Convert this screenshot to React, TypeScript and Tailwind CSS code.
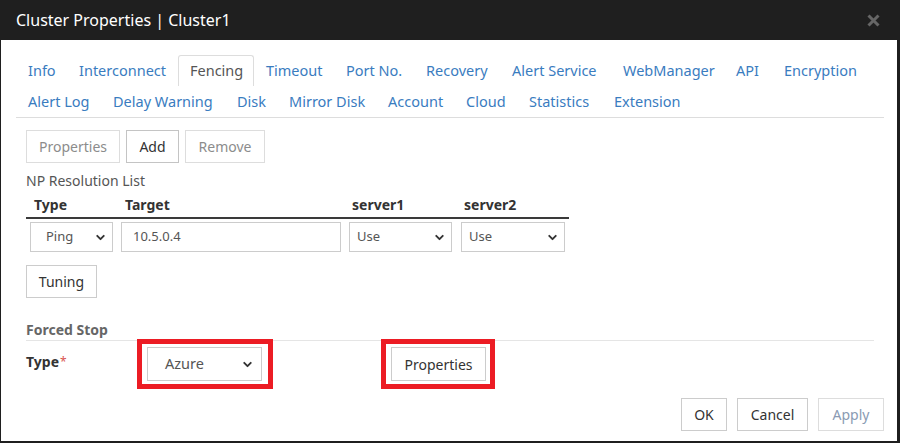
import { ChevronDown } from 'lucide-react';

const rowOne = [
  { label: 'Info', w: 'w-[51px]' },
  { label: 'Interconnect', w: 'w-[111px]' },
  { label: 'Fencing', w: 'w-[76px]', active: true },
  { label: 'Timeout', w: 'w-[80px]' },
  { label: 'Port No.', w: 'w-[80px]' },
  { label: 'Recovery', w: 'w-[86px]' },
  { label: 'Alert Service', w: 'w-[111px]' },
  { label: 'WebManager', w: 'w-[113px]' },
  { label: 'API', w: 'w-[48px]' },
  { label: 'Encryption', w: 'w-[95px]' },
];

const rowTwo = [
  { label: 'Alert Log', w: 'w-[85px]' },
  { label: 'Delay Warning', w: 'w-[124px]' },
  { label: 'Disk', w: 'w-[52px]' },
  { label: 'Mirror Disk', w: 'w-[99px]' },
  { label: 'Account', w: 'w-[78px]' },
  { label: 'Cloud', w: 'w-[63px]' },
  { label: 'Statistics', w: 'w-[85px]' },
  { label: 'Extension', w: 'w-[90px]' },
];

type Tab = { label: string; w: string; active?: boolean };

function TabRow({ tabs }: { tabs: Tab[] }) {
  return (
    <div className="flex h-[31px]">
      {tabs.map((t) =>
        t.active ? (
          <div
            key={t.label}
            className={`${t.w} h-[31px] px-[11px] leading-[29px] border border-b-0 border-[#dddddd] rounded-t-[3px] text-[#555555]`}
          >
            {t.label}
          </div>
        ) : (
          <div key={t.label} className={`${t.w} h-[31px] px-[12px] leading-[31px] text-[#3a7cbf] whitespace-nowrap`}>
            {t.label}
          </div>
        )
      )}
    </div>
  );
}

function Btn({
  label,
  className = '',
  tone = 'text-[#333333] border-[#cccccc]',
}: {
  label: string;
  className?: string;
  tone?: string;
}) {
  return (
    <button className={`h-[33px] border bg-white text-[14px] leading-none ${tone} ${className}`}>{label}</button>
  );
}

function FakeSelect({
  value,
  className,
  textClass = 'pl-[7px] text-[13px]',
}: {
  value: string;
  className: string;
  textClass?: string;
}) {
  return (
    <div className={`flex items-center justify-between border border-[#cccccc] bg-white pr-[5px] ${className}`}>
      <span className={`text-[#555555] ${textClass}`}>{value}</span>
      <ChevronDown className="w-[13px] h-[13px] text-[#333333]" strokeWidth={3.5} />
    </div>
  );
}

export default function App() {
  return (
    <div
      className="w-[900px] h-[443px] bg-[#1f1f1f] flex flex-col overflow-hidden"
      style={{ fontFamily: '"Noto Sans", "Open Sans", sans-serif' }}
    >
      {/* Title bar */}
      <div className="h-10 flex items-center justify-between pl-4 pr-[20px] shrink-0">
        <span className="text-white text-[16px]">Cluster Properties | Cluster1</span>
        <svg width="13" height="13" viewBox="0 0 13 13" className="mt-[0px]">
          <path d="M1.5 1.5 L11.5 11.5 M11.5 1.5 L1.5 11.5" stroke="#666666" strokeWidth="3" strokeLinecap="butt" />
        </svg>
      </div>

      {/* Body */}
      <div className="flex-1 bg-white ml-[1px] mr-[3px] mb-[2px] pl-[15px] pr-[13px] pt-[15px] flex flex-col">
        {/* Tabs */}
        <div className="border-b border-[#dddddd] text-[14.5px]">
          <TabRow tabs={rowOne} />
          <TabRow tabs={rowTwo} />
        </div>

        {/* Pane */}
        <div className="px-[10px] pt-[12px] flex flex-col">
          <div className="flex gap-[6px]">
            <Btn label="Properties" className="w-[94px]" tone="text-[#8c8c8c] border-[#dddddd]" />
            <Btn label="Add" className="w-[53px]" tone="text-[#333333] border-[#c4c4c4]" />
            <Btn label="Remove" className="w-[80px]" tone="text-[#8c8c8c] border-[#dddddd]" />
          </div>

          <div className="mt-[8px] h-[20px] leading-[20px] text-[14px] text-[#555555]">NP Resolution List</div>

          {/* Table */}
          <div className="w-[543px]">
            <div className="flex h-[28px] border-b-2 border-[#3a3a3a] text-[14px] font-bold text-[#333333] items-center">
              <div className="w-[91px] pl-[8px]">Type</div>
              <div className="w-[228px] pl-[8px]">Target</div>
              <div className="w-[112px] pl-[7px]">server1</div>
              <div className="w-[112px] pl-[7px]">server2</div>
            </div>
            <div className="flex pt-[3px] pb-[4px]">
              <div className="w-[91px] pl-[4px]">
                <FakeSelect value="Ping" className="w-[83px] h-[30px]" textClass="pl-[15px] text-[13px]" />
              </div>
              <div className="w-[228px] pl-[4px]">
                <div className="w-[220px] h-[30px] border border-[#cccccc] flex items-center pl-[11px] text-[13px] text-[#555555]">
                  10.5.0.4
                </div>
              </div>
              <div className="w-[112px] pl-[4px]">
                <FakeSelect value="Use" className="w-[103px] h-[30px]" />
              </div>
              <div className="w-[112px] pl-[4px]">
                <FakeSelect value="Use" className="w-[104px] h-[30px]" />
              </div>
            </div>
          </div>

          <div className="mt-[9px]">
            <Btn label="Tuning" className="w-[71px]" />
          </div>

          {/* Forced Stop */}
          <div className="mt-[22px] h-[21px] leading-[20px] border-b border-[#e5e5e5] text-[14px] font-bold text-[#666666]">
            Forced Stop
          </div>

          <div className="mt-[6px] flex items-start">
            <div className="w-[121px] pt-[5px] text-[14px] font-bold text-[#333333] leading-[20px]">
              Type<sup className="text-[#d9534f] font-normal text-[12px] ml-[1px] relative top-[-1px]">*</sup>
            </div>
            <div className="relative">
              <FakeSelect
                value="Azure"
                className="w-[115px] h-[34px] pr-[7px]"
                textClass="pl-[17px] text-[14.5px] text-[#444444]"
              />
              <div className="absolute top-[-8px] bottom-[-8px] left-[-10px] right-[-11px] border-[5px] border-[#ec1c24]" />
            </div>
            <div className="relative ml-[129px]">
              <button className="w-[95px] h-[34px] border border-[#cccccc] bg-white text-[14px] text-[#333333]">
                Properties
              </button>
              <div className="absolute top-[-8px] bottom-[-8px] left-[-10px] right-[-9px] border-[5px] border-[#ec1c24]" />
            </div>
          </div>

          {/* Footer */}
          <div className="mt-[17px] flex justify-end gap-[10px] mr-[-10px]">
            <Btn label="OK" className="w-[46px]" />
            <Btn label="Cancel" className="w-[71px]" />
            <Btn label="Apply" className="w-[66px]" tone="text-[#8a9bb3] border-[#dddddd]" />
          </div>
        </div>
      </div>
    </div>
  );
}
